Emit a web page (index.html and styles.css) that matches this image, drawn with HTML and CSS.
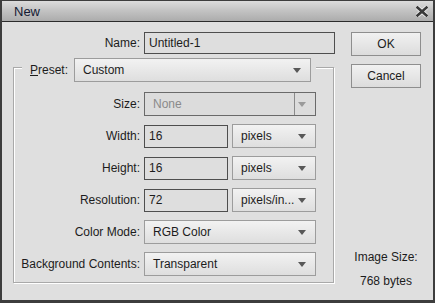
FILE: index.html
```html
<!DOCTYPE html>
<html>
<head>
	<meta http-equiv="Content-Type" content="text/html; charset=utf-8" />
	<title>New</title>
	<link rel="stylesheet" href="styles.css">
</head>
<body>
<div class="dialog">
	<div class="titlebar">
		<span class="title">New</span>
		<svg class="close" width="12" height="11" viewBox="0 0 12 11">
			<path d="M1.5 1.5 L10.5 9.5 M10.5 1.5 L1.5 9.5" stroke="#f4f4f4" stroke-width="4.2" stroke-linecap="square"/>
			<path d="M1.5 1.5 L10.5 9.5 M10.5 1.5 L1.5 9.5" stroke="#3a3a3a" stroke-width="2.6" stroke-linecap="square"/>
		</svg>
	</div>
	<div class="content">
		<div class="form">
			<div class="row name_row">
				<label class="label name_label">Name:</label>
				<div class="field name_field">Untitled-1</div>
			</div>
			<div class="group">
				<div class="group_head">
					<label class="preset_label"><u>P</u>reset:</label>
					<div class="select preset_select">
						<span>Custom</span><i class="arrow"></i>
					</div>
				</div>
				<div class="row">
					<label class="label">Size:</label>
					<div class="select wide disabled">
						<span>None</span><i class="arrow"></i>
					</div>
				</div>
				<div class="row">
					<label class="label">Width:</label>
					<div class="field small">16</div>
					<div class="select small">
						<span>pixels</span><i class="arrow"></i>
					</div>
				</div>
				<div class="row">
					<label class="label">Height:</label>
					<div class="field small">16</div>
					<div class="select small">
						<span>pixels</span><i class="arrow"></i>
					</div>
				</div>
				<div class="row">
					<label class="label">Resolution:</label>
					<div class="field small">72</div>
					<div class="select small">
						<span>pixels/in...</span><i class="arrow"></i>
					</div>
				</div>
				<div class="row">
					<label class="label">Color Mode:</label>
					<div class="select wide">
						<span>RGB Color</span><i class="arrow"></i>
					</div>
				</div>
				<div class="row">
					<label class="label">Background Contents:</label>
					<div class="select wide">
						<span>Transparent</span><i class="arrow"></i>
					</div>
				</div>
			</div>
		</div>
		<div class="side">
			<div class="button">OK</div>
			<div class="button">Cancel</div>
			<div class="image_size">
				<div>Image Size:</div>
				<div class="bytes">768 bytes</div>
			</div>
		</div>
	</div>
</div>
</body>
</html>
```

FILE: styles.css
```css
body{
	margin: 0;
	font-family: "Liberation Sans", Arial, sans-serif;
	font-size: 12px;
	color: #1c1c1c;
}

.dialog{
	width: 435px;
	height: 303px;
	box-sizing: border-box;
	border-style: solid;
	border-color: #3d3d3d;
	border-width: 1px 2px 3px 2px;
	background-color: #dfdfdf;
	display: flex;
	flex-direction: column;
}

.titlebar{
	flex-shrink: 0;
	height: 20px;
	border-bottom: 1px solid #2b2b2b;
	background: linear-gradient(#dcdcdc, #c4c4c4 45%, #acacac);
	display: flex;
	align-items: center;
	justify-content: space-between;
	padding: 0 4px 0 12px;
}
.title{
	font-size: 13px;
	color: #141a33;
}
.close{
	margin-right: 1px;
}

.content{
	flex: 1;
	display: flex;
	padding: 10px 12px 17px 0;
}

.form{
	width: 333px;
}

.row{
	display: flex;
	align-items: center;
	gap: 4px;
	margin-bottom: 8px;
}
.row:last-child{
	margin-bottom: 0;
}
.label{
	width: 125px;
	text-align: right;
	white-space: nowrap;
}
.name_row{
	margin-bottom: 0;
}
.name_label{
	width: 138px;
}

.field{
	height: 22px;
	box-sizing: border-box;
	border: 1px solid #4e4e4e;
	background-color: #dedede;
	padding: 0 4px;
	line-height: 20px;
}
.name_field{
	width: 191px;
}
.field.small{
	width: 84px;
	height: 23px;
	line-height: 21px;
}

.select{
	height: 24px;
	box-sizing: border-box;
	border: 1px solid #9c9c9c;
	background: linear-gradient(#f2f2f2, #dedede);
	display: flex;
	align-items: center;
	justify-content: space-between;
	padding: 0 9px 0 8px;
}
.select.small{
	width: 84px;
}
.select.wide{
	width: 172px;
}
.select.disabled{
	border-color: #6a6a6a;
	background: linear-gradient(#8a8a8a, #8a8a8a) no-repeat right 20px top / 1px 100%, #dcdcdc;
	color: #8a8a8a;
}
.select.disabled .arrow{
	border-top-color: #9a9a9a;
}

.arrow{
	width: 0;
	height: 0;
	border-left: 4px solid transparent;
	border-right: 4px solid transparent;
	border-top: 5px solid #585858;
}

.group{
	margin: 13px 0 0 11px;
	width: 318px;
	border: 1px solid #a9a9a9;
	box-shadow: 1px 1px 0 #fff, inset 1px 1px 0 #fff;
	padding: 0 0 6px 1px;
}
.group_head{
	margin: -10px 0 10px 7px;
	width: 294px;
	box-sizing: border-box;
	padding: 0 5px 0 8px;
	background-color: #dfdfdf;
	display: flex;
	align-items: center;
}
.preset_label{
	width: 44px;
}
.preset_select{
	flex: 1;
}

.side{
	width: 70px;
	margin-left: 16px;
	display: flex;
	flex-direction: column;
	gap: 8px;
}
.button{
	height: 24px;
	box-sizing: border-box;
	border: 1px solid #8e8e8e;
	background: linear-gradient(#f1f1f1, #dcdcdc);
	text-align: center;
	line-height: 22px;
}
.image_size{
	margin-top: auto;
	margin-bottom: -5px;
	text-align: center;
	line-height: 14px;
}
.bytes{
	margin-top: 10px;
}
```
